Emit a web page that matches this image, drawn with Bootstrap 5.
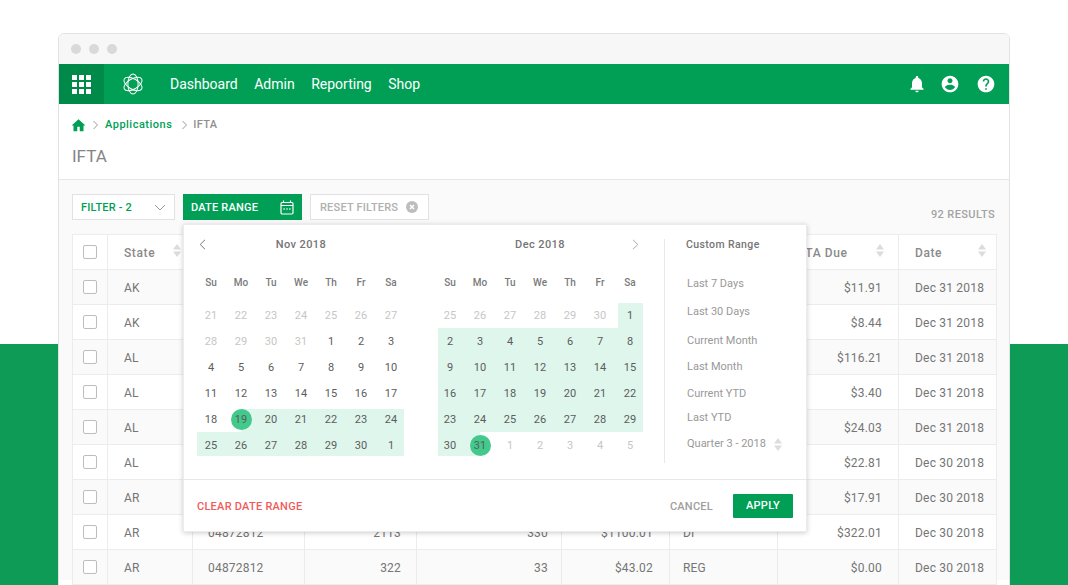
<!DOCTYPE html>
<html lang="en">
<head>
    <meta charset="UTF-8">
    <meta name="viewport" content="width=device-width, initial-scale=1.0">
    <title>IFTA</title>
    <link href="https://cdn.jsdelivr.net/npm/bootstrap@5.3.0/dist/css/bootstrap.min.css" rel="stylesheet">
    <style>
        html, body {
            height: 585px;
            overflow: hidden;
        }
        body {
            font-family: Roboto, "Liberation Sans", sans-serif;
            font-size: 12px;
            color: #757575;
            background: linear-gradient(#fff 344px, #0e9b56 344px);
            padding: 33px 58px 0;
        }
        .app-window {
            height: 560px;
            background: #fff;
            border: 1px solid #e2e2e2;
            border-radius: 6px 6px 0 0;
            overflow: hidden;
        }
        .title-bar {
            height: 30px;
            background: #f7f7f7;
            padding-left: 12px;
            gap: 8px;
        }
        .title-dot {
            width: 10px;
            height: 10px;
            border-radius: 50%;
            background: #d9d9d9;
        }
        .app-nav {
            height: 40px;
            background: #009f55;
        }
        .grid-btn {
            width: 45px;
            height: 40px;
            background: #008a4a;
        }
        .grid-icon {
            display: grid;
            grid-template-columns: repeat(3, 5px);
            gap: 2px;
        }
        .grid-icon span {
            height: 5px;
            background: #fff;
        }
        .app-nav .logo {
            margin: 0 26px 0 18px;
        }
        .app-nav .navbar-nav .nav-link {
            color: #fff;
            font-size: 14px;
            padding: 0;
            margin-right: 16.5px;
        }
        .nav-tools {
            padding-right: 13px;
        }
        .crumbs {
            height: 40px;
            padding: 2px 0 0 12px;
            font-size: 11px;
            font-weight: 500;
            letter-spacing: .5px;
            color: #8f8f8f;
            gap: 6px;
        }
        .crumbs a {
            color: #009f55;
            text-decoration: none;
        }
        .crumbs span {
            letter-spacing: .3px;
            margin-left: -1px;
        }
        .page-title {
            font-size: 17px;
            font-weight: 400;
            line-height: 24px;
            color: #858585;
            margin: 0;
            padding: 0 13px 11px;
            border-bottom: 1px solid #e6e6e6;
        }
        .content {
            background: #fafafa;
            padding: 14px 13px 0;
            height: 400px;
        }
        .tool-btn {
            height: 26px;
            font-size: 11px;
            font-weight: 500;
            letter-spacing: .2px;
            border-radius: 0;
            padding: 2px 8px 0;
            background: #fff;
            border: 1px solid #e2e2e2;
        }
        .tool-btn svg {
            margin-top: -2px;
        }
        .btn-filter {
            width: 103px;
            color: #009f55;
        }
        .btn-range {
            width: 119px;
            background: #009f55;
            border-color: #009f55;
            color: #fff;
            padding-left: 7px;
            padding-right: 7px;
        }
        .btn-reset {
            width: 119px;
            color: #b0b0b0;
            padding-left: 9px;
            padding-right: 10px;
        }
        .tool-row {
            gap: 8px;
            height: 26px;
            margin-bottom: 14px;
        }
        .results {
            font-size: 11px;
            font-weight: 500;
            letter-spacing: .4px;
            color: #a3a3a3;
            align-self: flex-end;
            margin-right: 1px;
            line-height: 13px;
            margin-bottom: -1px;
        }
        .data-table {
            table-layout: fixed;
            width: 924px;
            margin: 0;
            font-size: 12px;
            letter-spacing: .2px;
            color: #757575;
            background: #fff;
            border-collapse: collapse;
        }
        .data-table th, .data-table td {
            height: 35px;
            padding: 1px 16px 0;
            border: 1px solid #ececec;
            vertical-align: middle;
            color: #757575;
            box-shadow: none;
            white-space: nowrap;
        }
        .data-table th {
            font-weight: 500;
            letter-spacing: .6px;
            color: #8a8a8a;
            background: #fff;
            padding-top: 2px;
        }
        .data-table tbody tr:nth-child(odd) td {
            background: #fafafa;
        }
        .data-table td:nth-child(3) {
            padding-left: 15px;
        }
        .data-table td:nth-child(4) {
            padding-right: 15px;
        }
        .data-table td:nth-child(5) {
            padding-right: 13px;
        }
        .data-table td:nth-child(7) {
            padding-left: 13px;
        }
        .data-table .check-cell {
            padding: 0 0 0 10px;
        }
        .data-table .form-check-input {
            display: block;
            width: 14px;
            height: 14px;
            margin: 0;
            border: 1px solid #bdbdbd;
            border-radius: 2px;
        }
        .sort-icon {
            float: right;
            margin: 0 -5px 0 0;
        }
        .data-table th:nth-child(8) .sort-icon {
            margin-right: -2px;
        }
        .data-table th:nth-child(9) .sort-icon {
            margin-right: -6px;
        }
        .range-pop {
            position: absolute;
            left: 124px;
            top: 44px;
            width: 624px;
            height: 308px;
            background: #fff;
            border: 1px solid #ececec;
            box-shadow: 0 1px 5px rgba(0, 0, 0, .2);
        }
        .pop-body {
            height: 255px;
            padding: 9px 0 0 12px;
            border-bottom: 1px solid #e8e8e8;
        }
        .month-box {
            width: 210px;
            margin-right: 29px;
        }
        .month-box + .month-box {
            margin-right: 19px;
        }
        .month-head {
            height: 20px;
            line-height: 21px;
            font-size: 11px;
            font-weight: 500;
            letter-spacing: .4px;
            color: #757575;
        }
        .month-head svg {
            position: absolute;
            top: 5px;
        }
        .week-row, .day-grid {
            display: grid;
            grid-template-columns: repeat(7, 30px);
            text-align: center;
        }
        .week-row {
            height: 20px;
            line-height: 20px;
            margin: 19px 0 9px;
            font-size: 10px;
            font-weight: 500;
            color: #7a7a7a;
        }
        .day-grid {
            grid-auto-rows: 26px;
            font-size: 11px;
            line-height: 25px;
            color: #5c5c5c;
        }
        .day-grid span {
            padding-top: 1px;
        }
        .day-off {
            color: #c6c6c6;
        }
        .in-range {
            background: linear-gradient(#dff6ec, #dff6ec) no-repeat;
            background-position: var(--l, 0) var(--t, 0);
            background-size: calc(100% - var(--l, 0px) - var(--r, 0px)) calc(100% - var(--t, 0px) - var(--b, 0px));
        }
        .day-end {
            position: relative;
            z-index: 0;
        }
        .day-end::before {
            content: "";
            position: absolute;
            left: 4.5px;
            top: 3px;
            width: 21px;
            height: 21px;
            border-radius: 50%;
            background: #43c98c;
            z-index: -1;
        }
        .preset-col {
            height: 224px;
            margin-top: 5px;
            border-left: 1px solid #e8e8e8;
            padding-left: 21px;
        }
        .preset-title {
            font-size: 10.5px;
            font-weight: 500;
            letter-spacing: .4px;
            line-height: 12px;
            color: #757575;
            margin: 0 0 25px;
        }
        .preset-list {
            list-style: none;
            margin: 0;
            padding: 0 0 0 1px;
            font-size: 11px;
            line-height: 16px;
            color: #999;
        }
        .preset-list li:nth-child(2) { margin-top: 12px; }
        .preset-list li:nth-child(3) { margin-top: 13px; }
        .preset-list li:nth-child(4) { margin-top: 10px; }
        .preset-list li:nth-child(5) { margin-top: 11px; }
        .preset-list li:nth-child(6) { margin-top: 8px; }
        .preset-list li:nth-child(7) { margin-top: 10px; }
        .pop-foot {
            height: 51px;
            padding: 1px 13px 0;
            font-size: 11px;
            font-weight: 500;
            letter-spacing: .25px;
        }
        .clear-link {
            color: #f25a5a;
            padding-top: 2px;
        }
        .cancel-link {
            color: #9e9e9e;
            margin-right: 20px;
            padding-top: 2px;
        }
        .btn-apply {
            width: 60px;
            height: 24px;
            padding: 0;
            font-size: 11px;
            font-weight: 500;
            letter-spacing: .3px;
            border-radius: 1px;
            background: #009f55;
            border: 0;
            color: #fff;
        }
    </style>
</head>
<body>
    <div class="app-window">
        <div class="title-bar d-flex align-items-center">
            <span class="title-dot"></span>
            <span class="title-dot"></span>
            <span class="title-dot"></span>
        </div>

        <nav class="app-nav navbar navbar-expand p-0 flex-nowrap">
            <div class="grid-btn d-flex align-items-center justify-content-center">
                <div class="grid-icon">
                    <span></span><span></span><span></span>
                    <span></span><span></span><span></span>
                    <span></span><span></span><span></span>
                </div>
            </div>
            <svg class="logo" width="22" height="22" viewBox="0 0 24 24" fill="none" stroke="#fff" stroke-width="1.1">
                <ellipse cx="12" cy="12" rx="11" ry="5.6" transform="rotate(30 12 12)"/>
                <ellipse cx="12" cy="12" rx="11" ry="5.6" transform="rotate(90 12 12)"/>
                <ellipse cx="12" cy="12" rx="11" ry="5.6" transform="rotate(150 12 12)"/>
            </svg>
            <ul class="navbar-nav">
                <li class="nav-item"><a class="nav-link" href="#">Dashboard</a></li>
                <li class="nav-item"><a class="nav-link" href="#">Admin</a></li>
                <li class="nav-item"><a class="nav-link" href="#">Reporting</a></li>
                <li class="nav-item"><a class="nav-link" href="#">Shop</a></li>
            </ul>
            <div class="nav-tools ms-auto d-flex align-items-center gap-3">
                <svg width="20" height="20" viewBox="0 0 24 24" fill="#fff" style="margin-right:-3px"><path d="M12 22c1.1 0 2-.9 2-2h-4c0 1.1.89 2 2 2zm6-6v-5c0-3.07-1.64-5.64-4.5-6.32V4c0-.83-.67-1.5-1.5-1.5s-1.5.67-1.5 1.5v.68C7.63 5.36 6 7.92 6 11v5l-2 2v1h16v-1l-2-2z"/></svg>
                <svg width="20" height="20" viewBox="0 0 24 24" fill="#fff"><path d="M12 2C6.48 2 2 6.48 2 12s4.48 10 10 10 10-4.48 10-10S17.52 2 12 2zm0 3c1.66 0 3 1.34 3 3s-1.34 3-3 3-3-1.34-3-3 1.34-3 3-3zm0 14.2c-2.5 0-4.71-1.28-6-3.22.03-1.99 4-3.08 6-3.08 1.99 0 5.97 1.09 6 3.08-1.29 1.94-3.5 3.22-6 3.22z"/></svg>
                <svg width="20" height="20" viewBox="0 0 24 24" fill="#fff"><path d="M12 2C6.48 2 2 6.48 2 12s4.48 10 10 10 10-4.48 10-10S17.52 2 12 2zm1 17h-2v-2h2v2zm2.07-7.75l-.9.92C13.45 12.9 13 13.5 13 15h-2v-.5c0-1.1.45-2.1 1.17-2.83l1.24-1.26c.37-.36.59-.86.59-1.41 0-1.1-.9-2-2-2s-2 .9-2 2H8c0-2.21 1.79-4 4-4s4 1.79 4 4c0 .88-.36 1.68-.93 2.25z"/></svg>
            </div>
        </nav>

        <!-- Breadcrumb -->
        <div class="crumbs d-flex align-items-center">
            <svg width="15" height="15" viewBox="0 0 24 24" fill="#009f55"><path d="M10 21v-7h4v7h6v-9h3L12 2 1 12h3v9z"/></svg>
            <svg width="7" height="10" viewBox="0 0 7 10" fill="none" stroke="#999"><path d="M1.500 1l4 4-4 4"/></svg>
            <a href="#">Applications</a>
            <svg width="7" height="10" viewBox="0 0 7 10" fill="none" stroke="#999" style="margin-left:3px"><path d="M1.500 1l4 4-4 4"/></svg>
            <span>IFTA</span>
        </div>
        <h1 class="page-title">IFTA</h1>

        <div class="content position-relative">
            <!-- Filters -->
            <div class="tool-row d-flex">
                <button class="btn tool-btn btn-filter d-flex align-items-center justify-content-between" type="button">
                    FILTER - 2
                    <svg width="12" height="7" viewBox="0 0 12 7" fill="none" stroke="#999"><path d="M1 1l5 5 5-5"/></svg>
                </button>
                <button class="btn tool-btn btn-range d-flex align-items-center justify-content-between" type="button">
                    DATE RANGE
                    <svg width="14" height="15" viewBox="0 0 14 15" fill="none" stroke="#fff" stroke-width="1.2">
                        <rect x="1" y="2.500" width="12" height="11.500" rx="1.200"/>
                        <path d="M1 5.500h12M3.500 .5v2.500M10.500 .5v2.500"/>
                        <path d="M3.500 9h1.200M6.400 9h1.200M9.300 9h1.200" stroke-width="1.300"/>
                    </svg>
                </button>
                <button class="btn tool-btn btn-reset d-flex align-items-center justify-content-between" type="button">
                    RESET FILTERS
                    <svg width="12" height="12" viewBox="0 0 12 12"><circle cx="6" cy="6" r="6" fill="#bdbdbd"/><path d="M4 4l4 4M8 4l-4 4" stroke="#fff" stroke-width="1.500"/></svg>
                </button>
                <div class="results ms-auto">92 RESULTS</div>
            </div>

            <table class="table data-table">
                <colgroup>
                    <col style="width:35px"><col style="width:85px"><col style="width:112px">
                    <col style="width:112px"><col style="width:145px"><col style="width:108px">
                    <col style="width:108px"><col style="width:121px"><col style="width:98px">
                </colgroup>
                <thead id="tableHead"></thead>
                <tbody id="tableBody"></tbody>
            </table>

            <!-- Date range popup -->
            <div class="range-pop">
                <div class="pop-body d-flex">
                    <div class="month-box">
                        <div class="month-head position-relative text-center">
                            Nov 2018
                            <svg style="left:3px" width="7" height="11" viewBox="0 0 7 11" fill="none" stroke="#777"><path d="M6 .8L1.200 5.500 6 10.200"/></svg>
                        </div>
                        <div class="week-row" data-week></div>
                        <div class="day-grid" id="monthNov"></div>
                    </div>
                    <div class="month-box">
                        <div class="month-head position-relative text-center">
                            Dec 2018
                            <svg style="right:6px" width="7" height="11" viewBox="0 0 7 11" fill="none" stroke="#aaa"><path d="M1 .8l4.800 4.700L1 10.200"/></svg>
                        </div>
                        <div class="week-row" data-week></div>
                        <div class="day-grid" id="monthDec"></div>
                    </div>
                    <div class="preset-col">
                        <p class="preset-title">Custom Range</p>
                        <ul class="preset-list">
                            <li>Last 7 Days</li>
                            <li>Last 30 Days</li>
                            <li>Current Month</li>
                            <li>Last Month</li>
                            <li>Current YTD</li>
                            <li>Last YTD</li>
                            <li class="d-flex align-items-center gap-2">Quarter 3 - 2018
                                <svg width="8" height="13" viewBox="0 0 8 13" fill="#ddd"><path d="M4 0l4 5.500H0zM4 13L0 7.500h8z"/></svg>
                            </li>
                        </ul>
                    </div>
                </div>
                <div class="pop-foot d-flex align-items-center">
                    <span class="clear-link me-auto">CLEAR DATE RANGE</span>
                    <span class="cancel-link">CANCEL</span>
                    <button class="btn btn-apply" type="button">APPLY</button>
                </div>
            </div>
        </div>
    </div>

    <script>
        const sortIcon = '<svg class="sort-icon" width="8" height="13" viewBox="0 0 8 13" fill="#dcdcdc"><path d="M4 0l4 5.500H0zM4 13L0 7.500h8z"/></svg>';
        // Columns behind the popup stay empty, their values can't be read
        const headers = ["State", "", "", "", "", "", "IFTA Due", "Date"];
        const rows = [
            ["AK", "", "", "", "", "", "$11.91", "Dec 31 2018"],
            ["AK", "", "", "", "", "", "$8.44", "Dec 31 2018"],
            ["AL", "", "", "", "", "", "$116.21", "Dec 31 2018"],
            ["AL", "", "", "", "", "", "$3.40", "Dec 31 2018"],
            ["AL", "", "", "", "", "", "$24.03", "Dec 31 2018"],
            ["AL", "", "", "", "", "", "$22.81", "Dec 30 2018"],
            ["AR", "", "", "", "", "", "$17.91", "Dec 30 2018"],
            ["AR", "04872812", "2113", "330", "$1100.01", "DI", "$322.01", "Dec 30 2018"],
            ["AR", "04872812", "322", "33", "$43.02", "REG", "$0.00", "Dec 30 2018"]
        ];
        const rightCols = [2, 3, 4, 6];
        const checkbox = '<input class="form-check-input" type="checkbox">';

        document.getElementById("tableHead").innerHTML =
            `<tr><th class="check-cell">${checkbox}</th>` +
            headers.map(h => `<th>${h ? h + sortIcon : ""}</th>`).join("") + "</tr>";

        document.getElementById("tableBody").innerHTML = rows.map(row =>
            `<tr><td class="check-cell">${checkbox}</td>` +
            row.map((v, i) => `<td class="${rightCols.includes(i) ? "text-end" : ""}">${v}</td>`).join("") +
            "</tr>"
        ).join("");

        document.querySelectorAll("[data-week]").forEach(el => {
            el.innerHTML = ["Su", "Mo", "Tu", "We", "Th", "Fr", "Sa"].map(d => `<span>${d}</span>`).join("");
        });

        // Calendars: the range is drawn cell by cell, circle marks the selected day
        function drawMonth(id, days, firstOn, firstOff, startAt, endAt, circleAt, inset) {
            document.getElementById(id).innerHTML = days.map((d, i) => {
                const muted = i < firstOn || i >= firstOff;
                const inRange = i >= startAt && i <= endAt;
                const classes = [];
                if (muted) classes.push("day-off");
                if (inRange) classes.push("in-range");
                if (i === circleAt) classes.push("day-end");
                const vars = inRange ? inset(i % 7, Math.floor(i / 7), i) : "";
                return `<span class="${classes.join(" ")}" style="${vars}">${d}</span>`;
            }).join("");
        }

        const nov = [21,22,23,24,25,26,27,28,29,30,31,1,2,3,4,5,6,7,8,9,10,11,12,13,14,15,16,17,18,19,20,21,22,23,24,25,26,27,28,29,30,1];
        const dec = [25,26,27,28,29,30,1,2,3,4,5,6,7,8,9,10,11,12,13,14,15,16,17,18,19,20,21,22,23,24,25,26,27,28,29,30,31,1,2,3,4,5];

        drawMonth("monthNov", nov, 11, 42, 29, 41, 29, (col, row, i) =>
            (row === 4 ? "--t:3px;" : "--b:2px;") + (col === 0 ? "--l:1px;" : "") + (col === 6 ? "--r:2px;" : "") + (i === 29 ? "--l:15px;" : "")
        );
        drawMonth("monthDec", dec, 6, 37, 6, 36, 36, (col, row, i) =>
            (row === 0 ? "--t:1px;" : "") + (row === 5 ? "--b:2px;" : "") + (col === 0 ? "--l:3px;" : "") + (col === 6 ? "--r:2px;" : "") + (i === 6 ? "--l:3px;" : "") + (i === 36 ? "--r:15px;" : "")
        );
    </script>
    <script src="https://cdn.jsdelivr.net/npm/bootstrap@5.3.0/dist/js/bootstrap.bundle.min.js"></script>
</body>
</html>
